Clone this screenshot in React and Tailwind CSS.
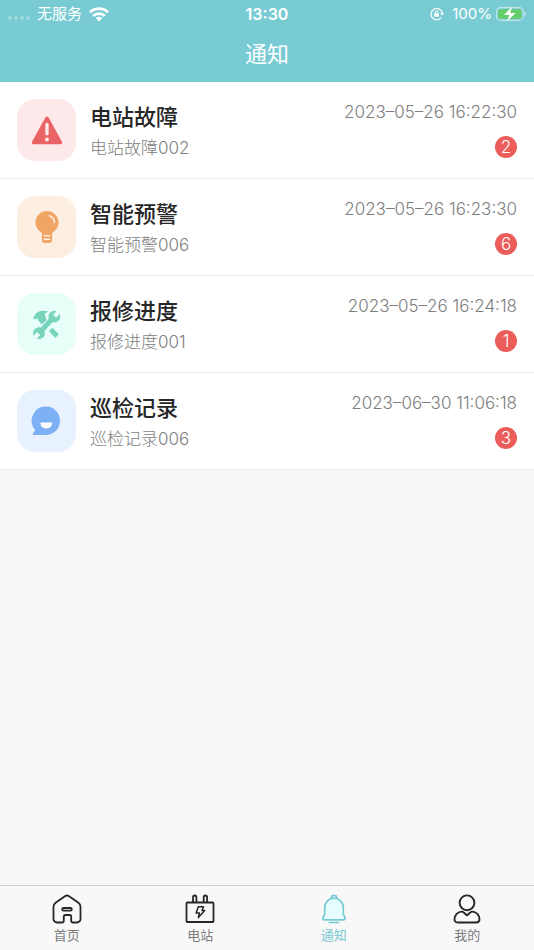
import React, { useState } from 'react';

const AlertIcon = () => (
  <svg viewBox="0 0 32 32" className="h-8 w-8" aria-hidden="true">
    <path d="M16 4.200 29.500 28.500H2.500Z" fill="#ea6365" stroke="#ea6365" strokeWidth="3.400" strokeLinejoin="round" />
    <path d="M16 10.500v9.300" stroke="#fde9e9" strokeWidth="3.400" strokeLinecap="round" />
    <circle cx="16" cy="25.400" r="2" fill="#fde9e9" />
  </svg>
);

const BulbIcon = () => (
  <svg viewBox="0 0 32 32" className="h-8 w-8" aria-hidden="true">
    <path
      d="M16 0a11.6 11.6 0 0 1 11.6 11.6c0 4.200-2.300 7.500-5.400 9.700-.8.600-1.100 1.200-1.100 2.200V29a3 3 0 0 1-3 3h-4.200a3 3 0 0 1-3-3v-5.500c0-1-.3-1.600-1.100-2.200-3.100-2.200-5.400-5.500-5.400-9.700A11.600 11.600 0 0 1 16 0Z"
      fill="#f1a565"
    />
    <path d="M18.500 4.800a7.500 7.500 0 0 1 4.900 6.700" fill="none" stroke="#fdeee2" strokeWidth="1.700" strokeLinecap="round" />
    <path d="M13.300 24.700h5.400M13.300 28.300h5.400" stroke="#fdeee2" strokeWidth="1.600" strokeLinecap="round" />
  </svg>
);

const ToolsIcon = () => (
  <svg viewBox="1 -1 32 32" className="h-8 w-8" aria-hidden="true">
    {/* hammer */}
    <path d="M3 8.800 6.200 4.200C8.500 1.800 13.500.6 18.500 2.800 16.500 3.300 15 4.200 14.700 5.500L16.800 11.800 11.700 15.300 8.300 11.500 7 9.300 4.800 10.500Z" fill="#78d3bd" />
    <path d="m19 22 3.300-3.200 6.500 6.500-3.500 3.700Z" fill="#78d3bd" />
    {/* wrench */}
    <path d="M9 24 24.300 7.800" stroke="#e8fef9" strokeWidth="6.600" />
    <path d="M9 24 24.300 7.800" stroke="#78d3bd" strokeWidth="5" />
    <circle cx="24.300" cy="7.600" r="5.900" fill="#78d3bd" />
    <circle cx="9" cy="24.200" r="5.900" fill="#78d3bd" />
    <path d="M24.600 7.200 31 .8M8.700 24.600 2.300 31" stroke="#e8fef9" strokeWidth="4.400" />
  </svg>
);

const ChatIcon = () => (
  <svg viewBox="1 0 32 32" className="h-8 w-8" aria-hidden="true">
    <path d="M16.300 1.500a13.700 14.200 0 0 1 0 28.400H3.700c-1 0-1.300-1-.7-1.700l2.300-3A13.700 14.200 0 0 1 16.300 1.500Z" fill="#7cb1f6" />
    <path d="M11.300 17.600h10c.7 0 1 .4.9 1a6 6 0 0 1-11.800 0c-.1-.6.200-1 .9-1Z" fill="#fff" />
  </svg>
);

const HomeIcon = () => (
  <svg viewBox="0 0 30 30" className="h-[30px] w-[30px]" fill="none" stroke="currentColor" strokeWidth="1.800" strokeLinejoin="round" aria-hidden="true">
    <path d="M13.300 2.100a3 3 0 0 1 3.400 0l9.700 6.700a5 5 0 0 1 2.100 4.100V25a3.500 3.500 0 0 1-3.500 3.500h-4.300a1.500 1.500 0 0 1-1.500-1.500v-4.500a1.500 1.500 0 0 0-1.500-1.500h-4.400a1.500 1.500 0 0 0-1.500 1.500V27a1.500 1.500 0 0 1-1.500 1.500H5A3.500 3.500 0 0 1 1.500 25V12.900a5 5 0 0 1 2.100-4.100Z" />
    <rect x="10.200" y="14" width="9.600" height="2.600" rx="1.300" />
  </svg>
);

const StationIcon = () => (
  <svg viewBox="0 0 30 30" className="h-[30px] w-[30px]" fill="none" stroke="currentColor" strokeWidth="1.800" strokeLinejoin="round" aria-hidden="true">
    <rect x="1.500" y="8.500" width="27" height="19.500" rx="1" />
    <path d="M8 8.500V3.200a1.700 1.700 0 0 1 3.400 0v5.300M18.700 8.500V3.200a1.700 1.700 0 0 1 3.400 0v5.300" />
    <path d="M13.300 12.700h5.200L17 16.600h2.700l-6.300 7 1-4.600h-3.300Z" strokeWidth="1.500" />
  </svg>
);

const BellIcon = () => (
  <svg viewBox="0 0 30 30" className="h-[30px] w-[30px]" fill="none" stroke="currentColor" strokeWidth="1.700" strokeLinecap="round" strokeLinejoin="round" aria-hidden="true">
    <path d="M12.300 4.300V3.700a2.700 2.400 0 0 1 5.400 0v.6" />
    <path d="M15 4.200a9.300 9.300 0 0 1 9.300 9.300v6.800l1.700 3.200c.6 1.200 0 2.300-1.200 2.300H5.200c-1.200 0-1.800-1.100-1.200-2.300l1.700-3.200v-6.800A9.300 9.300 0 0 1 15 4.200Z" fill="#e6fdff" />
    <path d="M10.500 28.500h9" />
  </svg>
);

const UserIcon = () => (
  <svg viewBox="0 0 30 30" className="h-[30px] w-[30px]" fill="none" stroke="currentColor" strokeWidth="1.900" strokeLinejoin="round" aria-hidden="true">
    <circle cx="15" cy="8.800" r="7.400" />
    <path d="M9.600 17.600c1 0 1.800.5 2.500 1.200l2.100 2c.5.500 1.100.5 1.600 0l2.100-2c.7-.7 1.500-1.200 2.500-1.200 3.700 0 7.100 3.600 7.100 7.700 0 2-1.300 3.200-3.200 3.200H5.700c-1.900 0-3.200-1.200-3.200-3.200 0-4.100 3.400-7.700 7.100-7.700Z" />
  </svg>
);

const notices = [
  { id: 1, title: '电站故障', desc: '电站故障002', time: '2023–05–26 16:22:30', count: 2, icon: AlertIcon, bg: 'bg-[#fde9e9]' },
  { id: 2, title: '智能预警', desc: '智能预警006', time: '2023–05–26 16:23:30', count: 6, icon: BulbIcon, bg: 'bg-[#fdeee2]' },
  { id: 3, title: '报修进度', desc: '报修进度001', time: '2023–05–26 16:24:18', count: 1, icon: ToolsIcon, bg: 'bg-[#e8fef9]' },
  { id: 4, title: '巡检记录', desc: '巡检记录006', time: '2023–06–30 11:06:18', count: 3, icon: ChatIcon, bg: 'bg-[#e8f2fe]' },
];

const tabs = [
  { key: 'home', label: '首页', icon: HomeIcon },
  { key: 'station', label: '电站', icon: StationIcon },
  { key: 'notice', label: '通知', icon: BellIcon },
  { key: 'mine', label: '我的', icon: UserIcon },
];

const StatusBar = () => (
  <div className="grid h-7 grid-cols-3 items-center px-2 text-[15px] leading-7">
    <div className="flex items-center gap-[7px]">
      <svg viewBox="0 0 22 4" className="mt-2 h-1 w-[22px]" fill="#fff" opacity="0.3" aria-hidden="true">
        <circle cx="2" cy="2" r="1.900" />
        <circle cx="8" cy="2" r="1.900" />
        <circle cx="14" cy="2" r="1.900" />
        <circle cx="20" cy="2" r="1.900" />
      </svg>
      <span>无服务</span>
      <svg viewBox="0 0 20 15" className="h-[15px] w-5" fill="none" stroke="#fff" strokeWidth="2.800" aria-hidden="true">
        <path d="M1 5.200a13 13 0 0 1 18 0M4.200 8.900a8.300 8.300 0 0 1 11.600 0" />
        <path d="M6.800 11.300a4.700 4.700 0 0 1 6.400 0L10 14.600Z" fill="#fff" stroke="none" />
      </svg>
    </div>
    <span className="text-center text-base font-semibold">13:30</span>
    <div className="flex items-center justify-end gap-1">
      <svg viewBox="0 0 14 14" className="mr-1 h-[14px] w-[14px]" fill="none" stroke="#fff" strokeWidth="1.200" aria-hidden="true">
        <path d="M11.200 10.700A5.700 5.700 0 1 1 12.300 6" />
        <path d="m10.200 6 2.200 2.600L14 6Z" fill="#fff" stroke="none" />
        <rect x="4.200" y="6.300" width="4.800" height="3.500" rx="0.500" fill="#fff" stroke="none" />
        <path d="M5.200 6.500V5.200a1.400 1.400 0 0 1 2.800 0v1.300" strokeWidth="1" />
      </svg>
      <span>100%</span>
      <svg viewBox="0 0 30 16" className="h-4 w-[30px]" aria-hidden="true">
        <rect x="0.600" y="1.600" width="26.500" height="12.800" rx="4" fill="none" stroke="#fff" strokeOpacity="0.550" strokeWidth="1.100" />
        <rect x="2.200" y="3.200" width="23.300" height="9.600" rx="2.500" fill="#66cd6b" />
        <path d="M28.500 5.600c1.700.5 1.700 4.300 0 4.800Z" fill="#fff" opacity="0.600" />
        <path d="M16.200.6 8 9h5.300l-2.200 6.500L19.600 7h-5.400Z" fill="#fff" />
      </svg>
    </div>
  </div>
);

const NoticeItem = ({ notice }) => {
  const Icon = notice.icon;

  return (
    <li className="flex items-center gap-[14px] border-b border-[#ececee] bg-white px-[17px] py-[15px]">
      <div className={`flex h-[62px] w-[59px] shrink-0 items-center justify-center rounded-[18px] ${notice.bg}`}>
        <Icon />
      </div>
      <div className="min-w-0 flex-1 pt-1">
        <h2 className="text-[22px] leading-8 font-medium text-[#262626]">{notice.title}</h2>
        <p className="text-[17px] leading-[30px] font-light text-[#7d7d7d]">{notice.desc}</p>
      </div>
      <div className="flex flex-col items-end pb-[2px]">
        <time className="text-[17px] leading-6 font-light text-[#7d7d7d]">{notice.time}</time>
        <span className="mt-3 h-[22px] w-[22px] rounded-full bg-[#ea5d5b] text-center text-[17px] leading-[22px] font-light text-white">
          {notice.count}
        </span>
      </div>
    </li>
  );
};

const App = () => {
  const [active, setActive] = useState('notice');

  return (
    <div className="flex min-h-screen flex-col bg-[#f5f6f8] font-['Inter','Noto_Sans_CJK_SC',sans-serif]">
      <header className="bg-[#79cbd3] text-white">
        <StatusBar />
        <h1 className="pt-[10px] pb-3 text-center text-[22px] leading-8">通知</h1>
      </header>

      <main className="flex-1">
        <ul>
          {notices.map((notice) => (
            <NoticeItem key={notice.id} notice={notice} />
          ))}
        </ul>
      </main>

      <nav className="grid grid-cols-4 border-t border-[#cfd1d6] bg-[#f8f8f8] pt-2 pb-1">
        {tabs.map((tab) => {
          const Icon = tab.icon;
          return (
            <button
              key={tab.key}
              onClick={() => setActive(tab.key)}
              className={`flex flex-col items-center ${active === tab.key ? 'text-[#79cbd3]' : 'text-[#262626]'}`}
            >
              <Icon />
              <span className={`text-[13px] leading-[22px] ${active === tab.key ? '' : 'text-[#7d7d7d]'}`}>{tab.label}</span>
            </button>
          );
        })}
      </nav>
    </div>
  );
};

export default App;
